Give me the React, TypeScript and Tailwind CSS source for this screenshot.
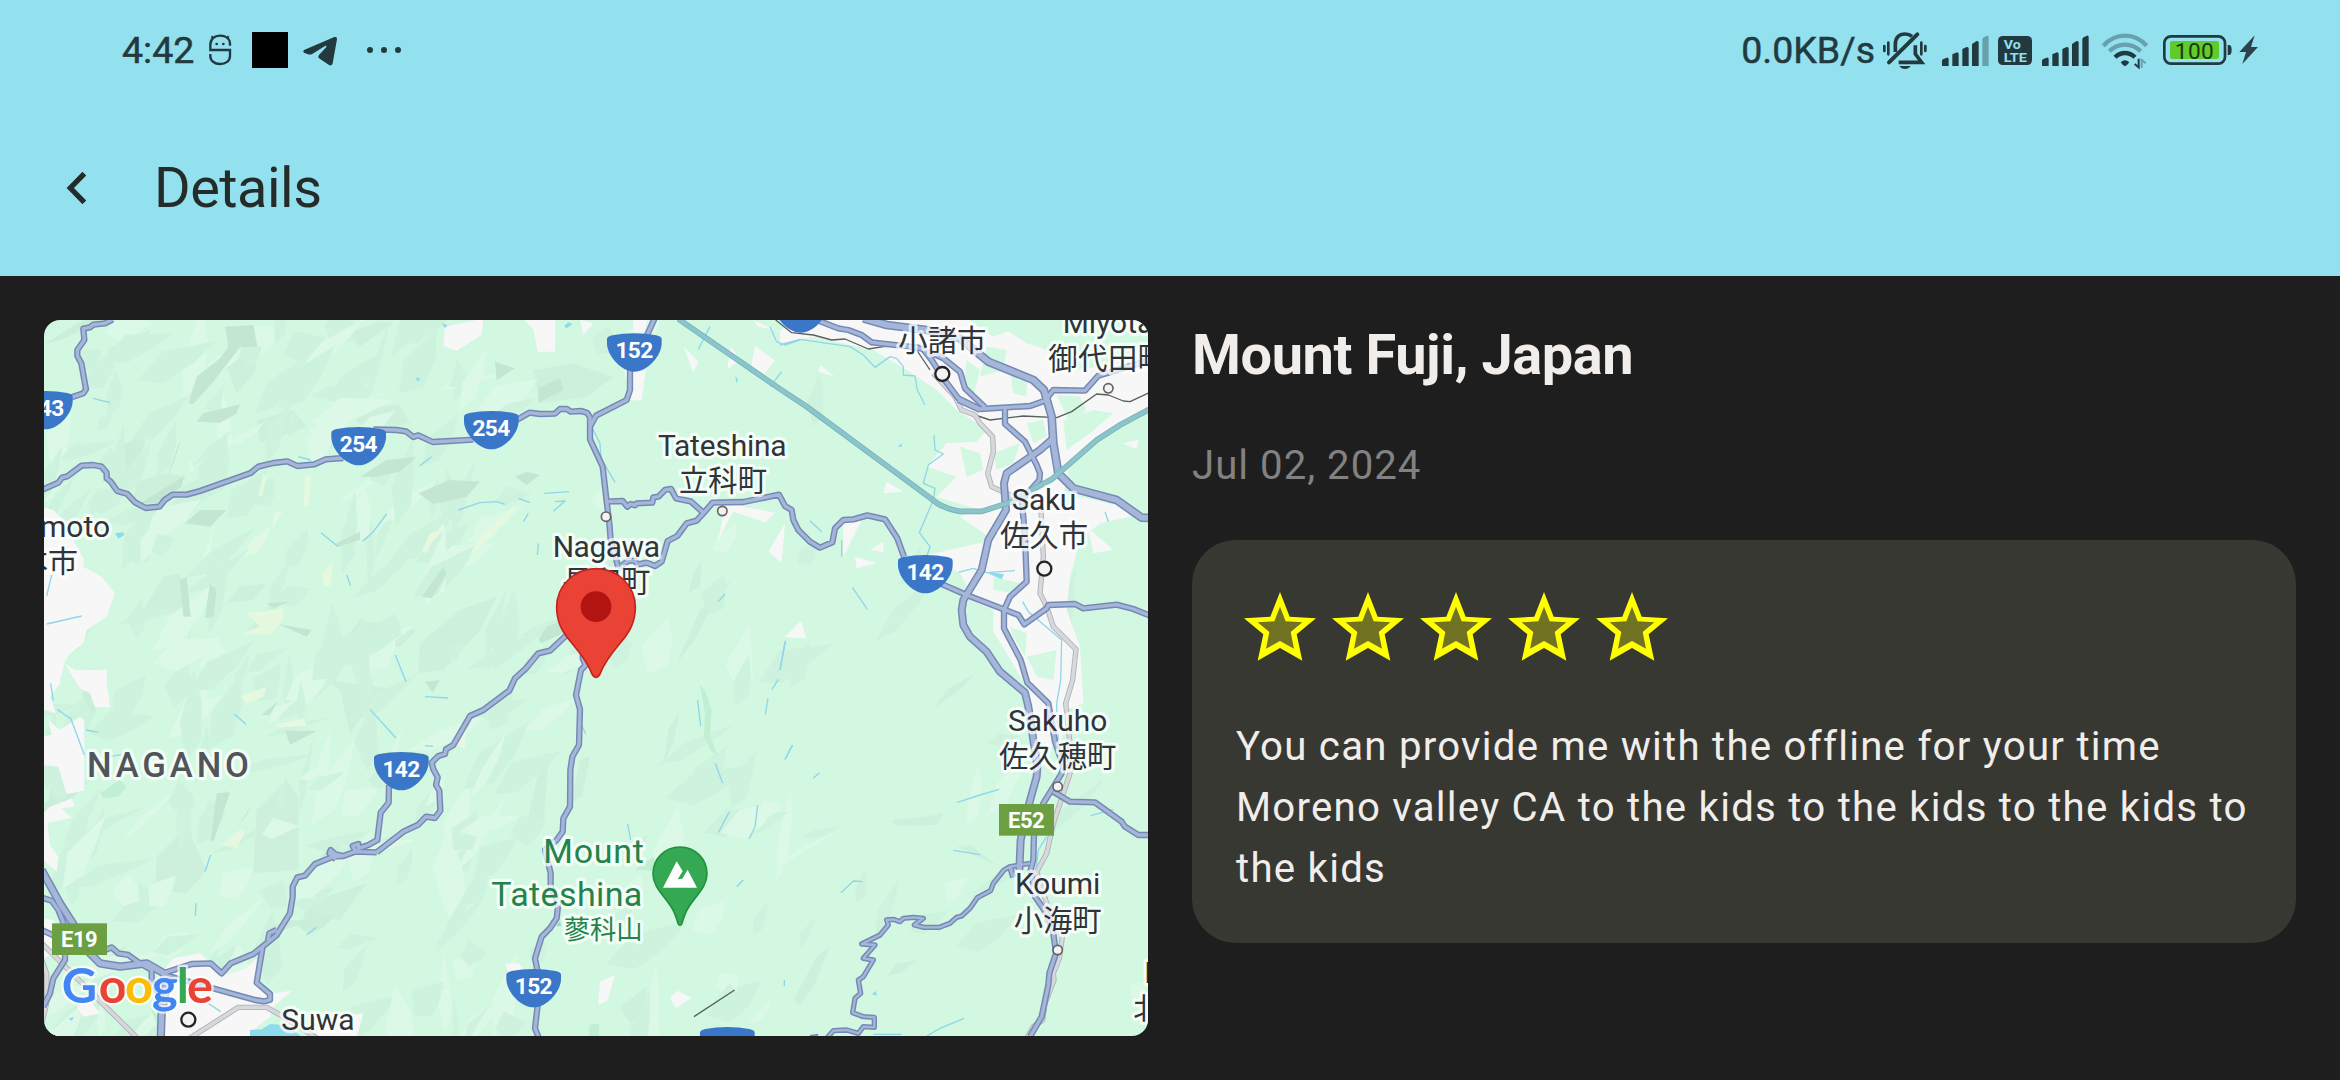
import React from "react";

type Tile = [number, number];
type Road = { t: Tile; p: string; w?: number };

/* Map features are stored per survey tile, at three units to the pixel. */
const A: Tile = [40, 310];
const B: Tile = [400, 310];
const C: Tile = [780, 310];
const D: Tile = [40, 670];
const E: Tile = [400, 670];
const F: Tile = [780, 670];

const place = ([x, y]: Tile) => `translate(${x} ${y}) scale(0.33333)`;

const roads: Road[] = [
  { t: A, p: "218,28 195,40 160,44 150,52 130,56 133,90 112,120 112,138 124,160 138,238 130,250 95,262" },
  { t: A, p: "5,540 55,518 66,503 82,499 125,467 160,465 185,470 200,488 200,505 212,515 232,543 262,552 285,577 317,594 358,590 374,570 398,554 440,554 480,543 632,489 655,470 700,459 742,454 772,468 823,463 857,448 910,444" },
  { t: A, p: "1000,358 1070,360 1098,364 1120,381 1135,376 1178,396 1300,389" },
  { t: B, p: "350,330 388,308 420,312 465,311 480,297 500,297 512,305 545,303 562,309 570,322 570,388 608,470 620,575 628,640 632,690 655,772" },
  { t: B, p: "764,25 730,100" },
  { t: B, p: "690,175 690,240 680,270 588,317 570,350" },
  { t: B, p: "620,575 668,573 682,590 692,582 705,586 710,580 757,578 760,562 775,560 795,540 813,537 828,565 872,574 910,608" },
  { t: B, p: "655,775 685,752 705,752 712,764 740,758 765,768 785,755 803,693 832,678 860,640 890,632 912,608 938,578 1030,576 1137,554 1155,588 1175,600 1180,630 1195,660 1230,695 1260,713 1297,697 1305,655 1330,630 1360,628 1402,616 1455,628 1492,685 1512,740" },
  { t: B, p: "500,975 450,1022 415,1030 378,1075 345,1105 328,1142 250,1200 210,1218 160,1305 138,1318 135,1332 115,1338 95,1358 100,1378 113,1402 108,1425 118,1442 121,1502 105,1524 78,1520 55,1544 10,1565 -70,1627" },
  { t: D, p: "1010,547 945,545 910,558 880,560 825,582 795,617 772,622 758,650 758,680 750,730 710,795 670,828 640,852 572,880 545,910 512,880 455,882 430,890 375,908" },
  { t: D, p: "1047,345 1046,398 1022,428 1012,510 985,525 955,535 955,522 938,528 948,545" },
  { t: D, p: "910,558 885,552 872,540 868,550 888,568" },
  { t: D, p: "668,830 650,938 690,972 690,990 672,994 645,990 375,915" },
  { t: D, p: "710,780 688,790 684,812" },
  { t: D, p: "5,600 60,700 100,762 150,850 180,880 240,890 320,880 372,910 378,960 365,1030 362,1110", w: 25 },
  { t: D, p: "5,683 35,692 55,720 75,770 75,870 40,925 30,970 10,1010" },
  { t: D, p: "195,840 215,832 235,850 265,855 300,880 335,900 335,935 375,1000" },
  { t: D, p: "5,780 60,805" },
  { t: B, p: "550,1005 548,1045 557,1065 543,1080 528,1155 540,1198 537,1305 517,1340 511,1380 510,1490 490,1525 488,1565 470,1590 435,1620 452,1690 452,1730 475,1780 470,1825 450,1855 425,1880 405,1945 412,1980 412,2095 405,2155 417,2185" },
  { t: C, p: "105,28 175,55 205,60 245,75 275,97 410,112 430,118 455,150 490,205 535,265 600,297 680,292 750,288 795,272 820,240 915,242 955,197 1110,150" },
  { t: C, p: "430,118 490,145 540,185 555,235 615,292" },
  { t: C, p: "675,292 675,342 735,395 770,465 780,490 778,510 725,570 728,600 735,680 740,815 690,860 672,900 672,955 722,1050 742,1118 805,1180 825,1295 850,1370 845,1390 790,1480 762,1570 760,1650 752,1680 765,1760 800,1810 820,1870 828,1930 808,1990 805,2025 785,2120 750,2180" },
  { t: C, p: "480,820 560,855 715,915 733,943 800,895 805,885 885,882 910,895 1010,884 1060,897 1110,917" },
  { t: C, p: "535,270 600,300" },
  { t: C, p: "820,385 780,420 680,490 672,520 678,600 625,690 605,780 550,870 545,900 550,945 570,980 620,1025 660,1085 735,1148 745,1190 772,1370 770,1400 745,1490 722,1590 718,1680", w: 24 },
  { t: C, p: "250,25 320,45 440,60 540,85 625,155 760,210 792,240 815,320 820,400 835,490 880,535 1010,570 1085,623 1110,624", w: 26 },
  { t: F, p: "820,365 870,395 945,397 1025,455 1035,470 1075,495 1110,495" },
  { t: F, p: "750,580 690,590 672,600 640,640 632,662 592,683 570,715 545,738 530,742 510,760 478,772 432,772 403,765 430,745 400,742 370,745 360,755 340,748 320,750 325,765 300,795 245,822 285,825 250,865 280,870 250,920 235,930 242,970 225,985 218,1028 250,1040 283,1042 283,1072 250,1070 235,1090 200,1080 160,1082 140,1105", w: 16 },
  { t: F, p: "690,590 700,622" },
  { t: F, p: "90,1102 115,1098", w: 14 },
];

const rails: Road[] = [
  { t: D, p: "0,815 290,1102" },
  { t: D, p: "5,870 20,910 20,1000 5,1060" },
  { t: D, p: "450,1104 595,1012 680,1012 730,1040 830,1104" },
  { t: C, p: "460,190 525,260 545,300 585,315 600,340 638,380 640,425 623,490 635,530 700,560" },
  { t: C, p: "782,580 790,740 780,850 800,890 820,950 888,1018 878,1110 857,1180 870,1300 870,1390 850,1450 820,1540 800,1630 770,1685 800,1780 847,1880 838,1945 820,1990 822,2010 795,2080 788,2130 760,2150 740,2185" },
];

const tracks: Road[] = [
  { t: C, p: "-13,30 35,68 100,75 155,90 195,87 265,117 310,110 345,108 410,120 450,180" },
  { t: C, p: "585,315 630,330 730,318 830,323 875,305 950,252 985,255 1030,273 1050,275 1110,247" },
  { t: E, p: "882,1040 1004,960" },
];

const streams: Road[] = [
  { t: A, p: "160,265 185,272 210,277" }, { t: A, p: "775,440 812,450" }, { t: A, p: "843,668 895,710" },
  { t: A, p: "1040,612 1000,665 968,694" }, { t: A, p: "1175,440 1138,468" }, { t: A, p: "20,942 125,918" },
  { t: A, p: "35,795 20,858" }, { t: A, p: "920,795 932,828" }, { t: A, p: "1066,1035 1098,1115" },
  { t: B, p: "432,550 507,545" }, { t: B, p: "175,600 240,578 290,575 315,583" }, { t: B, p: "355,565 390,578" },
  { t: B, p: "460,604 495,573 465,575" }, { t: B, p: "412,735 415,700" }, { t: B, p: "385,610 370,635" },
  { t: B, p: "575,350 600,400 603,445 645,517" }, { t: B, p: "930,50 895,118" }, { t: B, p: "1110,50 1130,95 1155,105 1200,90" },
  { t: B, p: "1145,185 1110,230" }, { t: B, p: "955,875 975,852" }, { t: B, p: "1157,992 1140,1080" },
  { t: C, p: "0,105 60,88 210,110 250,135 285,172 330,140 350,145 370,170 370,195 405,198 412,240 435,285" },
  { t: C, p: "462,376 465,420 490,432 445,465 430,520 465,535 460,570 418,668 450,710 440,740" },
  { t: C, p: "535,787 580,775 620,788 705,782" }, { t: C, p: "90,632 125,665" }, { t: C, p: "217,832 262,898" },
  { t: C, p: "728,875 745,905 845,990 842,1110 830,1180 830,1200 835,1290" }, { t: C, p: "975,605 985,635" },
  { t: C, p: "15,995 0,1080" }, { t: C, p: "185,690 185,740" },
  { t: D, p: "52,118 80,138 92,145 133,255" }, { t: D, p: "138,180 175,187" }, { t: D, p: "583,132 618,163" },
  { t: D, p: "190,262 245,254" }, { t: D, p: "512,555 495,605" }, { t: D, p: "468,700 466,738" },
  { t: D, p: "828,772 800,795" }, { t: D, p: "32,40 40,92" }, { t: D, p: "990,118 1068,204" },
  { t: D, p: "505,1000 542,1025" }, { t: E, p: "75,80 145,84" }, { t: E, p: "75,227 100,229" },
  { t: E, p: "545,165 557,192" }, { t: E, p: "893,90 902,168" }, { t: E, p: "1104,85 1096,133" },
  { t: E, p: "1135,28 1115,60" }, { t: E, p: "1178,225 1155,268" }, { t: E, p: "946,280 968,340" },
  { t: E, p: "1073,405 1065,470 1048,506" }, { t: E, p: "988,425 955,488" }, { t: E, p: "683,462 692,510" },
  { t: E, p: "1030,630 1010,650" }, { t: F, p: "532,397 600,375 657,358" }, { t: F, p: "520,541 600,554" },
  { t: F, p: "37,225 15,268" }, { t: F, p: "183,668 220,633 248,635" }, { t: F, p: "118,308 100,325" },
  { t: F, p: "440,1098 480,1075 552,1045" }, { t: F, p: "280,1093 365,1093" }, { t: F, p: "932,437 1000,418" },
  { t: F, p: "800,500 775,540 768,600" }, { t: E, p: "1153,930 1153,948" },
];

const built: Road[] = [
  { t: A, p: "0,590 40,600 60,620 100,690 130,745 130,770 185,800 225,850 200,920 140,960 130,1000 85,1035 75,1055 60,1110 0,1110" },
  { t: A, p: "75,1060 95,1075 145,1102 200,1075 200,1115 110,1115" },
  { t: D, p: "85,0 195,0 210,112 165,112 150,70 120,55" },
  { t: D, p: "0,0 60,0 60,40 30,80 48,130 12,120 0,200" },
  { t: D, p: "0,200 35,195 25,150 60,180 120,140 133,150 133,362 80,372 55,290 0,285" },
  { t: D, p: "0,440 30,410 95,385 105,410 65,415 95,443 22,460 30,525 55,560 50,605 0,560" },
  { t: D, p: "370,900 400,865 480,850 520,885 560,915 620,895 650,865 650,935 700,970 755,962 700,1010 690,1040 640,1080 640,1104 375,1104" },
  { t: D, p: "0,745 40,750 130,850 60,862 0,862" },
  { t: D, p: "110,1010 150,990 180,1030 130,1040" },
  { t: D, p: "850,1050 970,1030 950,1104 820,1104" },
  { t: B, p: "135,50 205,35 250,25 245,75 170,122 130,108" },
  { t: B, p: "370,25 465,25 465,125 412,125 402,62" },
  { t: B, p: "670,160 740,160 725,272 690,270" },
  { t: B, p: "700,28 740,28 735,65 700,70" },
  { t: B, p: "850,108 895,155 880,188" },
  { t: B, p: "540,30 580,40 550,75" },
  { t: B, p: "1065,108 1125,152 1085,202 1050,185" },
  { t: B, p: "992,108 1020,150 982,178" },
  { t: B, p: "1060,30 1125,60 1075,50" },
  { t: B, p: "1105,725 1155,640 1145,758" },
  { t: B, p: "930,560 1030,590 1125,608 1095,637 1000,605 985,630 955,692 970,615" },
  { t: B, p: "1155,980 1200,935 1200,984" },
  { t: C, p: "60,25 560,25 640,80 720,50 860,180 1110,160 1110,300 960,380 870,460 840,600 900,560 1030,590 1050,620 960,640 900,690 870,800 860,900 900,1010 910,1180 860,1200 840,1320 770,1290 745,1140 680,1030 600,900 540,790 440,735 640,690 540,620 600,600 470,560 530,500 440,470 500,400 590,395 620,360 530,300 470,240 380,180 280,120 100,80 0,100 0,60" },
  { t: C, p: "120,165 165,200 115,185" },
  { t: C, p: "320,515 370,545 310,550" },
  { t: C, p: "15,980 65,935 78,985" },
  { t: C, p: "270,720 310,695 310,725" },
  { t: C, p: "190,630 250,620 190,740" },
  { t: C, p: "225,740 290,760 230,775" },
  { t: C, p: "1030,400 1075,390 1070,418" },
  { t: C, p: "925,655 1000,720 940,730" },
  { t: E, p: "315,882 358,880 370,897 325,905" },
  { t: E, p: "600,935 645,915 622,992 594,1004" },
  { t: E, p: "810,985 832,962 876,983 828,1014" },
];

const groves: Road[] = [
  { t: C, p: "620,110 680,120 670,180 600,200" }, { t: C, p: "640,35 760,32 820,60 900,100 860,140 740,100" },
  { t: C, p: "560,150 600,180 580,260 550,225" }, { t: C, p: "690,180 740,215 740,260 700,250" },
  { t: C, p: "830,255 900,260 920,300 870,340" }, { t: C, p: "640,430 720,400 700,460 650,480" },
  { t: C, p: "880,480 960,440 980,520 920,530" }, { t: C, p: "640,800 720,820 700,850 640,840" },
  { t: C, p: "570,870 640,900 640,960 590,940" }, { t: C, p: "690,950 740,970 735,1040 700,980" },
  { t: C, p: "850,330 940,300 1000,310 930,370 860,420" }, { t: C, p: "740,1040 830,1020 820,1110 770,1100" },
  { t: C, p: "540,410 600,430 610,480 560,500" }, { t: C, p: "740,340 790,330 800,380 760,400" },
];

const darkHills: Road[] = [
  { t: A, p: "555,50 640,45 652,110 600,112 520,215 460,282 445,280 470,200 540,145 565,110" },
  { t: A, p: "470,335 490,310 600,283 588,312 540,338" }, { t: A, p: "960,500 1040,450 1130,440 1080,485 1010,500" },
  { t: A, p: "300,580 430,500 425,530 350,580" }, { t: A, p: "435,640 480,600 560,600 510,650" },
  { t: A, p: "420,810 440,800 452,920 430,920" }, { t: A, p: "510,820 530,840 520,920 495,925" },
  { t: A, p: "715,942 815,960 800,980" }, { t: A, p: "680,880 750,875 700,895" },
  { t: A, p: "890,700 960,665 960,690 890,712" }, { t: A, p: "380,510 418,395 420,400 400,460" },
  { t: B, p: "415,235 480,205 490,240 415,278" }, { t: B, p: "55,550 150,510 240,515 200,560 100,582" },
  { t: B, p: "65,860 130,770 140,790 95,865" }, { t: B, p: "285,155 345,175 290,210" },
  { t: B, p: "345,500 380,485 420,495 380,525" }, { t: B, p: "415,990 440,950 490,930 490,970 425,1000" },
  { t: D, p: "735,182 830,182 750,225" }, { t: D, p: "530,370 570,367 520,515 512,512" },
  { t: D, p: "665,135 715,92 690,135" }, { t: D, p: "590,470 635,408 620,435" },
  { t: E, p: "75,35 120,30 98,68" },
];

const softHills: Road[] = [
  { t: A, p: "205,115 290,80 330,60 310,110 205,155" }, { t: A, p: "920,70 1020,35 1060,40 960,110" },
  { t: A, p: "940,320 1000,290 1080,285 1110,340 960,345" }, { t: A, p: "905,1000 960,930 1130,960 1080,1010 980,1010" },
  { t: A, p: "290,515 380,490 440,500 360,590 280,570" }, { t: A, p: "310,900 370,800 420,790 440,900 350,910" },
  { t: A, p: "650,330 760,300 800,350 660,400" }, { t: A, p: "560,170 640,110 650,180 590,250" },
  { t: A, p: "600,830 680,820 640,870 560,880" }, { t: B, p: "400,180 520,160 640,200 560,260 420,280" },
  { t: B, p: "60,1000 180,900 290,860 240,960 130,1080 55,1090" }, { t: B, p: "880,790 905,750 900,830 865,850" },
  { t: B, p: "900,900 1000,800 930,900 890,980 830,1060" }, { t: D, p: "650,420 740,330 775,380 775,600 640,610" },
  { t: D, p: "350,560 440,470 500,600 440,670 345,660" }, { t: D, p: "800,700 980,640 900,750 790,740" },
  { t: D, p: "860,30 1080,60 1000,90 930,190 900,60" }, { t: E, p: "380,465 425,265 445,270 430,470" },
  { t: E, p: "510,400 540,270 570,260 545,380" }, { t: E, p: "790,280 805,180 840,120 820,220" },
  { t: E, p: "660,1010 740,950 740,1040 690,1060" }, { t: F, p: "460,115 500,60 585,10 540,60" },
  { t: F, p: "335,450 435,440 490,430 470,465 350,468" }, { t: F, p: "40,990 110,860 150,830 100,950 60,1005" },
  { t: F, p: "320,920 350,880 410,870 370,905" }, { t: F, p: "530,530 570,525 650,585 590,560" },
];
const creamHills: Road[] = [
  { t: A, p: "620,910 730,895 730,930 690,975 605,972 660,950" }, { t: A, p: "795,500 812,495 806,590 792,585" },
  { t: A, p: "700,610 730,600 698,655" }, { t: A, p: "1170,670 1190,665 1160,730 1145,725" },
  { t: A, p: "845,790 880,755 870,830 850,825" }, { t: A, p: "445,445 465,480 452,485" },
  { t: A, p: "670,490 680,500 665,560 655,555" }, { t: B, p: "70,720 130,640 135,655 60,735" },
  { t: B, p: "230,690 350,580 320,630 210,740" }, { t: B, p: "110,860 140,800 130,845" },
  { t: D, p: "705,165 790,145 800,168 720,172" }, { t: D, p: "545,525 600,480 615,485 590,535" },
  { t: D, p: "600,80 680,50 670,80 620,100" }, { t: E, p: "150,220 200,170 195,235" },
];
const woods: Road[] = [
  { t: E, p: "900,45 915,60 935,120 930,195 952,255 935,245 912,200 915,130" },
  { t: E, p: "568,1065 597,1060 597,1104 568,1104" }, { t: E, p: "705,598 760,560 775,605" },
  { t: D, p: "180,370 240,330 260,350 235,380 190,385" }, { t: D, p: "330,1010 372,1060 350,1060" },
];

/* Relief shading: a fixed-seed scatter of facets, leaning along the ridges. */
const relief = (() => {
  let seed = 20240702;
  const rnd = () => {
    seed = (seed * 1664525 + 1013904223) % 4294967296;
    return seed / 4294967296;
  };
  const tones = ["#cdf2dd", "#dbf9e6", "#cef2de", "#dbf9e6", "#caeed9", "#e0f9e3"];
  const out: { d: string; c: string }[] = [];
  for (let i = 0; i < 620; i++) {
    const x = 44 + rnd() * 1104;
    const y = 320 + rnd() * 716;
    const keep = x < 520 ? 0.85 : x < 800 ? (y > 620 ? 0.4 : 0.06) : y > 680 ? 0.25 : 0.04;
    const a = -0.2 - rnd() * 1.4;
    const len = 12 + rnd() * 36;
    const wid = 3 + rnd() * 13;
    const k = rnd();
    const skew = rnd() - 0.5;
    const tone = Math.floor(rnd() * rnd() * 6);
    if (k > keep) continue;
    const q = (u: number, v: number) =>
      `${(x + u * Math.cos(a) - v * Math.sin(a)).toFixed(1)},${(y + u * Math.sin(a) + v * Math.cos(a)).toFixed(1)}`;
    out.push({ d: [q(-len, skew * 6), q(-len * 0.2, -wid), q(len, skew * 10), q(len * 0.3, wid * 0.7), q(-len * 0.5, wid)].join(" "), c: tones[tone] });
  }
  return out;
})();

function Lines({ items, color, width, dw = 0 }: { items: Road[]; color: string; width: number; dw?: number }) {
  return (
    <g fill="none" stroke={color} strokeLinejoin="round">
      {items.map((r, i) => (
        <polyline key={i} points={r.p} transform={place(r.t)} strokeWidth={(r.w ?? width) - dw} />
      ))}
    </g>
  );
}

function Areas({ items, color }: { items: Road[]; color: string }) {
  return (
    <g fill={color}>
      {items.map((r, i) => (
        <polygon key={i} points={r.p} transform={place(r.t)} />
      ))}
    </g>
  );
}

function Shield({ t, x, y, n }: { t: Tile; x: number; y: number; n?: string }) {
  return (
    <g transform={place(t)}>
      <g transform={`translate(${x} ${y})`}>
        <path d="M-82 17Q-82 10-66 6Q-35 0 0 0T66 6Q82 10 82 17V32C80 70 38 115 0 115S-80 70-82 32Z" fill="#3a77c8" />
        {n && (
          <text x="0" y="75" fontSize="68" fontWeight="700" fill="#fff" textAnchor="middle" textLength="113">{n}</text>
        )}
      </g>
    </g>
  );
}

function Plate({ t, x, y, n }: { t: Tile; x: number; y: number; n: string }) {
  return (
    <g transform={place(t)}>
      <rect x={x} y={y} width="165" height="95" fill="#6b9f41" />
      <text x={x + 82} y={y + 71} fontSize="66" fontWeight="700" fill="#fff" textAnchor="middle" textLength="110">{n}</text>
    </g>
  );
}

function Town({ t, x, y, big }: { t: Tile; x: number; y: number; big?: boolean }) {
  return (
    <circle transform={place(t)} cx={x} cy={y} r={big ? 21 : 14} fill="#f3f3f3" stroke={big ? "#242424" : "#646464"} strokeWidth={big ? 7 : 5} />
  );
}

type Anchor = "start" | "middle" | "end";
function Label({ t, x, y, s = 90, a = "middle", len, color = "#303338", weight = 400, children }: {
  t: Tile; x: number; y: number; s?: number; a?: Anchor; len?: number; color?: string; weight?: number; children: string;
}) {
  return (
    <text
      transform={place(t)} x={x} y={y} fontSize={s} textAnchor={a} textLength={len} fill={color} fontWeight={weight}
      stroke="#ffffff" strokeOpacity="0.72" strokeWidth="19" strokeLinejoin="round" paintOrder="stroke"
    >
      {children}
    </text>
  );
}

function MapCard() {
  return (
    <svg
      className="block h-[716px] w-[1104px] shrink-0 rounded-[16px] bg-[#d2f8e2] font-[Roboto,'Noto_Sans_CJK_JP',sans-serif]"
      viewBox="44 320 1104 716"
      lang="ja"
    >
      <Areas items={softHills} color="#ccf0dc" />
      {relief.map((f, i) => (
        <polygon key={i} points={f.d} fill={f.c} />
      ))}
      <Areas items={darkHills} color="#c3e6d2" />
      <Areas items={creamHills} color="#e6f8df" />
      <Areas items={woods} color="#c0efd1" />
      <Areas items={built} color="#f7f7f7" />
      <Areas items={groves} color="#d2f8e2" />
      <polygon transform={place(D)} points="630,1080 665,1078 690,1062 740,1065 790,1104 630,1104" fill="#90daee" />
      <Lines items={streams} color="#90d6e8" width={4} />
      <g fill="#90daee">
        <polygon transform={place(A)} points="225,670 250,666 252,676 235,686" />
        <polygon transform={place(A)} points="1125,202 1142,206 1134,215" />
        <polygon transform={place(B)} points="492,48 505,37 518,42 500,55" />
        <polygon transform={place(B)} points="125,40 143,45 135,54" />
        <polygon transform={place(B)} points="1005,197 1014,208 1010,220" />
        <polygon transform={place(C)} points="615,785 672,792 665,808 640,797" />
        <polygon transform={place(C)} points="354,410 365,399 365,411" />
        <polygon transform={place(F)} points="275,972 288,963 290,977" />
        <polygon transform={place(D)} points="85,1045 102,1042 95,1053" />
        <polygon transform={place(E)} points="468,768 480,752 484,768" />
      </g>
      <Lines items={tracks} color="#59605c" width={4} />
      <Lines items={rails} color="#adb0b3" width={16} />
      <Lines items={rails} color="#d6d8dc" width={11} />
      <Lines items={roads} color="#748ab5" width={19} />
      <Lines items={roads} color="#a6b6d9" width={19} dw={9} />
      <g transform={place(C)} fill="none">
        <path d="M-305 27L0 237L80 290L385 515L475 582Q508 600 540 604H605L690 577L765 535L815 508L950 390L1020 345L1110 297" stroke="#78b1b9" strokeWidth="17" />
        <path d="M-305 27L0 237L80 290L385 515L475 582Q508 600 540 604H605L690 577L765 535L815 508L950 390L1020 345L1110 297" stroke="#8bc5cc" strokeWidth="12" />
      </g>

      <Town t={B} x={618} y={620} />
      <Town t={B} x={967} y={603} />
      <Town t={C} x={487} y={192} big />
      <Town t={C} x={985} y={235} />
      <Town t={C} x={793} y={776} big />
      <Town t={D} x={445} y={1049} big />
      <Town t={F} x={833} y={350} />
      <Town t={F} x={833} y={840} />

      <Shield t={A} x={16} y={243} n="143" />
      <Shield t={A} x={956} y={351} n="254" />
      <Shield t={B} x={274} y={303} n="254" />
      <Shield t={B} x={703} y={70} n="152" />
      <Shield t={C} x={62} y={-47} />
      <Shield t={C} x={436} y={735} n="142" />
      <Shield t={D} x={1084} y={246} n="142" />
      <Shield t={E} x={401} y={897} n="152" />
      <Shield t={E} x={982} y={1071} />
      <Plate t={D} x={36} y={760} n="E19" />
      <Plate t={F} x={657} y={402} n="E52" />

      <Label t={A} x={210} y={682} a="end">moto</Label>
      <Label t={A} x={114} y={787} a="end">松本市</Label>
      <Label t={B} x={967} y={437} len={386}>Tateshina</Label>
      <Label t={B} x={969} y={542} s={88}>立科町</Label>
      <Label t={B} x={619} y={740} len={322}>Nagawa</Label>
      <Label t={B} x={619} y={846} s={88}>長和町</Label>
      <Label t={C} x={487} y={123} s={88}>小諸市</Label>
      <Label t={C} x={848} y={68} a="start">Miyota</Label>
      <Label t={C} x={805} y={178} s={88} a="start" len={356}>御代田町</Label>
      <Label t={C} x={792} y={600} len={194}>Saku</Label>
      <Label t={C} x={792} y={708} s={88}>佐久市</Label>
      <Label t={D} x={141} y={322} s={104} a="start" len={486} color="#50555b" weight={500}>NAGANO</Label>
      <Label t={D} x={724} y={1080} a="start" len={220}>Suwa</Label>
      <Label t={E} x={732} y={580} s={102} a="end" len={302} color="#23834a">Mount</Label>
      <Label t={E} x={727} y={707} s={102} a="end" len={453} color="#23834a">Tateshina</Label>
      <Label t={E} x={728} y={808} s={79} a="end" color="#23834a">蓼科山</Label>
      <Label t={F} x={833} y={182} len={298}>Sakuho</Label>
      <Label t={F} x={833} y={291} s={88}>佐久穂町</Label>
      <Label t={F} x={833} y={672} len={256}>Koumi</Label>
      <Label t={F} x={833} y={782} s={88}>小海町</Label>
      <Label t={F} x={1093} y={938} a="start">Kitaaiki</Label>
      <Label t={F} x={1060} y={1047} s={88} a="start">北相木村</Label>

      <text
        transform={place(D)} y="999" fontSize="146" fontFamily="Lato, sans-serif" fontWeight="700"
        stroke="#fff" strokeOpacity="0.7" strokeWidth="14" strokeLinejoin="round" paintOrder="stroke"
      >
        <tspan x="65" fill="#4285f4">G</tspan>
        <tspan x="176" fill="#ea4335">o</tspan>
        <tspan x="255" fill="#fbbc05">o</tspan>
        <tspan x="336" fill="#4285f4">g</tspan>
        <tspan x="410" fill="#34a853">l</tspan>
        <tspan x="441" fill="#ea4335">e</tspan>
      </text>

      <g transform={place(E)}>
        <path d="M840 531C886 531 921 567 921 612C921 650 890 675 868 708C856 726 850 745 846 760Q840 772 834 760C830 745 824 726 812 708C790 675 759 650 759 612C759 567 794 531 840 531Z" fill="#34a853" stroke="#22903f" strokeWidth="5" />
        <path d="M789 653L830 574L848 604L833 628L847 626L863 599L891 653Z" fill="#fff" />
      </g>
      <g transform={place(B)}>
        <path d="M588 776C654 776 706 828 706 892C706 935 690 965 660 1000C625 1042 610 1065 600 1092Q588 1112 576 1092C566 1065 551 1042 516 1000C486 965 470 935 470 892C470 828 522 776 588 776Z" fill="#ea4335" stroke="#c5221f" strokeWidth="5" />
        <circle cx="588" cy="890" r="46" fill="#b11411" />
      </g>
    </svg>
  );
}

function SignalBars({ weak }: { weak?: boolean }) {
  return (
    <svg className="h-12 w-[50px]" viewBox="240 18 150 144" fill="#223a3f">
      <path d="M246 137V122Q246 119 250 117L260 113Q266 112 266 118V137Q266 138 264 138H248Z" />
      <path d="M277 138V103L291 97Q296 97 296 102V138Z" />
      <path d="M307 138V87L320 81Q326 80 326 86V138Z" />
      <path d="M336 138V72L350 63Q356 62 356 68V138Z" />
      <path d="M367 138V58Q367 54 371 52L381 47Q386 46 386 52V138Z" fill={weak ? "#68a1ad" : "#223a3f"} />
    </svg>
  );
}

function StatusBar() {
  return (
    <div className="flex h-[100px] items-center pr-[81px] pl-[122px] text-[#223a3f]">
      <span className="w-[84px] text-[37.5px] leading-[44px] whitespace-nowrap [-webkit-text-stroke:0.5px_#223a3f]">4:42</span>
      <svg className="h-12 w-[30px]" viewBox="618 78 90 144" fill="none" stroke="#223a3f" strokeWidth="7">
        <path d="M690 137V132C690 116 677 107 660 107S631 118 631 134V150H690V168C690 183 677 192 660 192S631 182 631 168V162M635 109L641 116M686 109L679 116" />
        <circle cx="650" cy="132" r="4" fill="#223a3f" stroke="none" />
        <circle cx="670" cy="132" r="4" fill="#223a3f" stroke="none" />
      </svg>
      <span className="ml-4 h-9 w-9 bg-black" />
      <svg className="ml-3 h-12 w-10" viewBox="900 78 120 144" fill="#223a3f">
        <path d="M912 150L1003 111Q1012 109 1011 118L998 190Q996 199 987 195L957 175Q952 170 957 165L979 141Q981 136 975 138L938 161Q931 165 924 163L912 158Q907 154 912 150Z" />
      </svg>
      <svg className="ml-6 h-12 w-10" viewBox="1092 78 120 144" fill="#223a3f">
        <circle cx="1110" cy="150" r="9" />
        <circle cx="1152" cy="150" r="9" />
        <circle cx="1194" cy="150" r="9" />
      </svg>
      <span className="mr-[7px] ml-auto text-[37.5px] leading-[44px] whitespace-nowrap [-webkit-text-stroke:0.5px_#223a3f]">0.0KB/s</span>
      <svg className="h-12 w-[46px]" viewBox="66 18 138 144" fill="none" stroke="#223a3f" strokeWidth="9">
        <path d="M106 96V74C106 52 118 42 135 42C144 42 150 44 156 49" strokeWidth="11" />
        <path d="M87 127L172 43" strokeWidth="12" strokeLinecap="round" />
        <path d="M116 127H185L166 102V76" strokeWidth="11" />
        <path d="M73 78V93M85 68V103M184 68V103M196 78V93" strokeWidth="8" strokeLinecap="round" />
        <path d="M118 138H152Q146 147 135 147T118 138Z" fill="#223a3f" stroke="none" />
      </svg>
      <span className="w-3" />
      <SignalBars weak />
      <svg className="ml-2 h-12 w-[34px] font-[Roboto,sans-serif]" viewBox="414 18 102 144">
        <rect x="414" y="48" width="102" height="87" rx="14" fill="#223a3f" />
        <g fill="#93e0ee" fontWeight="700">
          <text x="431" y="88" fontSize="36" textLength="51" lengthAdjust="spacingAndGlyphs">Vo</text>
          <text x="431" y="125" fontSize="40" textLength="70" lengthAdjust="spacingAndGlyphs">LTE</text>
        </g>
      </svg>
      <span className="w-2" />
      <SignalBars />
      <svg className="ml-[11px] h-12 w-12" viewBox="723 18 144 144" fill="none" strokeWidth="13">
        <path d="M730 77Q758 47 795 47T860 77" stroke="#68a1ad" />
        <path d="M748 94Q768 74 795 74T842 94" stroke="#68a1ad" />
        <path d="M765 112Q778 99 795 99T825 112" stroke="#223a3f" />
        <path d="M782 127Q795 114 808 127Q802 136 795 139Q788 136 782 127Z" fill="#223a3f" />
        <path d="M836 116V142L824 132" stroke="#223a3f" strokeWidth="6" />
        <path d="M845 144V120L857 130" stroke="#68a1ad" strokeWidth="6" />
      </svg>
      <svg className="ml-[13px] h-12 w-[71px] font-[Roboto,sans-serif]" viewBox="906 18 213 144">
        <rect x="913" y="49" width="182" height="82" rx="20" fill="none" stroke="#223a3f" strokeWidth="8" />
        <rect x="930" y="63" width="147" height="54" rx="7" fill="#61cb2b" />
        <path d="M1103 75H1108Q1115 77 1115 90T1108 105H1103Z" fill="#223a3f" />
        <text x="1003" y="117" fontSize="68" fill="#1b3713" textAnchor="middle" textLength="117">100</text>
      </svg>
      <svg className="ml-1.5 h-12 w-5" viewBox="1137 18 60 144">
        <path d="M1184 46L1138 96H1158L1147 132L1194 81H1173Z" fill="#2b444b" />
      </svg>
    </div>
  );
}

function Star() {
  return (
    <svg className="h-[88px] w-[88px]" viewBox="48 12 264 264">
      <path d="M180 36L209 110L288 115L230 163L247 242L180 204L113 242L130 163L72 115L151 110Z" fill="#ffff00" />
      <path d="M180 80L197 124L247 127L212 156L222 206L180 183L138 206L148 156L113 127L163 124Z" fill="#727223" />
    </svg>
  );
}

export default function App() {
  return (
    <div className="flex h-[1080px] w-[2340px] flex-col overflow-hidden bg-[#1e1e1e] font-[Roboto,sans-serif]">
      <header className="h-[276px] shrink-0 bg-[#93e0ee]">
        <StatusBar />
        <div className="flex h-[176px] items-center">
          <svg className="ml-[62px] h-9 w-7" viewBox="186 510 84 108" fill="none" stroke="#252b28" strokeWidth="16">
            <path d="M253 521L211 564L253 607" />
          </svg>
          <h1 className="ml-[64px] text-[55.9px] leading-[66px] tracking-[-0.5px] text-[#252b28]">Details</h1>
        </div>
      </header>
      <main className="flex gap-11 p-11">
        <MapCard />
        <section className="flex w-[1104px] flex-col">
          <h2 className="text-[55.9px] leading-[71px] font-bold tracking-[-0.4px] text-[#f1edea]">Mount Fuji, Japan</h2>
          <p className="mt-11 text-[40.2px] leading-[61px] tracking-[1px] text-[#828282]">Jul 02, 2024</p>
          <div className="mt-11 rounded-[44px] bg-[#383833] p-11">
            <div className="flex">
              <Star />
              <Star />
              <Star />
              <Star />
              <Star />
            </div>
            <p className="mt-11 text-[40.2px] leading-[61px] tracking-[1.24px] text-[#f1edea]">
              You can provide me with the offline for your time Moreno valley CA to the kids to the kids to the kids to the kids
            </p>
          </div>
        </section>
      </main>
    </div>
  );
}
